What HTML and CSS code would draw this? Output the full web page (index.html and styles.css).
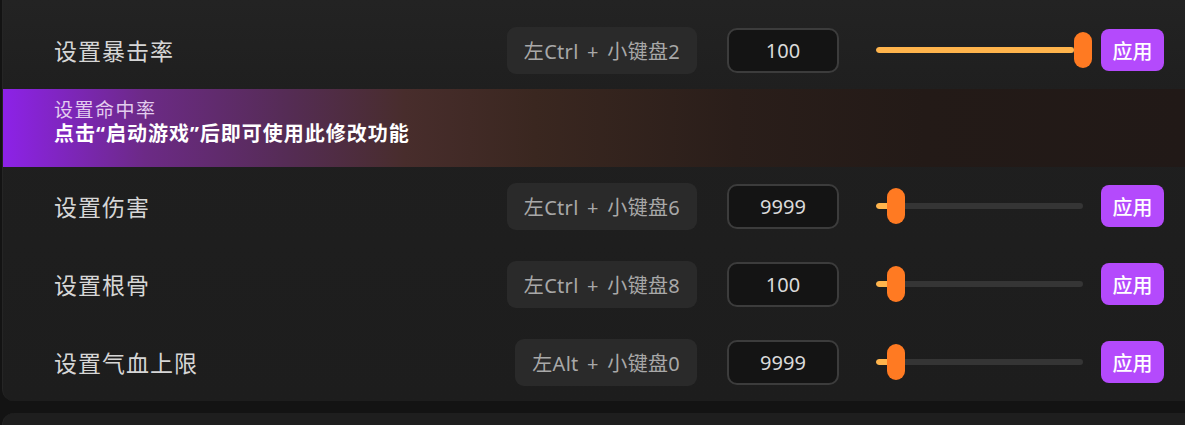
FILE: index.html
```html
<!DOCTYPE html>
<html lang="zh-CN">
<head>
<meta charset="utf-8">
<title>修改器</title>
<link rel="stylesheet" href="styles.css">
</head>
<body>
<div class="panel">
  <div class="row">
    <div class="label">设置暴击率</div>
    <div class="hotkey">左Ctrl + 小键盘2</div>
    <div class="value">100</div>
    <div class="slider">
      <div class="track"><div class="fill" style="width:198px"></div></div>
      <div class="thumb" style="left:198px"></div>
    </div>
    <button class="apply">应用</button>
  </div>
  <div class="row notice">
    <div class="notice-title">设置命中率</div>
    <div class="notice-text">点击“启动游戏”后即可使用此修改功能</div>
  </div>
  <div class="row">
    <div class="label">设置伤害</div>
    <div class="hotkey">左Ctrl + 小键盘6</div>
    <div class="value">9999</div>
    <div class="slider">
      <div class="track"><div class="fill" style="width:14px"></div></div>
      <div class="thumb" style="left:11px"></div>
    </div>
    <button class="apply">应用</button>
  </div>
  <div class="row">
    <div class="label">设置根骨</div>
    <div class="hotkey">左Ctrl + 小键盘8</div>
    <div class="value">100</div>
    <div class="slider">
      <div class="track"><div class="fill" style="width:14px"></div></div>
      <div class="thumb" style="left:11px"></div>
    </div>
    <button class="apply">应用</button>
  </div>
  <div class="row">
    <div class="label">设置气血上限</div>
    <div class="hotkey">左Alt + 小键盘0</div>
    <div class="value">9999</div>
    <div class="slider">
      <div class="track"><div class="fill" style="width:14px"></div></div>
      <div class="thumb" style="left:11px"></div>
    </div>
    <button class="apply">应用</button>
  </div>
</div>
<div class="panel next"></div>
</body>
</html>
```
FILE: styles.css
```css
html, body {
  margin: 0;
  padding: 0;
  background: #131313;
  overflow: hidden;
  font-family: "Noto Sans", "Noto Sans CJK SC", sans-serif;
}

.panel {
  margin-left: 2px;
  border-left: 1px solid #252525;
  background: linear-gradient(180deg, #232323 0px, #1f1f1f 90px, #1d1d1d 400px);
  border-radius: 0 0 0 12px;
  padding-top: 11px;
}

.panel.next {
  margin-top: 12px;
  height: 30px;
  padding-top: 0;
  border-radius: 12px 0 0 0;
  background: #1e1e1e;
}

.row {
  display: flex;
  align-items: center;
  height: 78px;
  padding: 0 21px 0 51px;
  box-sizing: border-box;
}

.label {
  flex: 1;
  color: #d6d6d6;
  font-size: 23px;
  letter-spacing: 1px;
}

.hotkey {
  height: 47px;
  display: flex;
  align-items: center;
  padding: 0 17px;
  background: #2a2a2a;
  border-radius: 9px;
  color: #a8a8a8;
  font-size: 20px;
  word-spacing: 3px;
  letter-spacing: 0.3px;
}

.value {
  margin-left: 30px;
  width: 112px;
  height: 45px;
  box-sizing: border-box;
  border: 2px solid #3c3c3c;
  border-radius: 10px;
  background: #141414;
  color: #dadada;
  font-size: 20px;
  display: flex;
  align-items: center;
  justify-content: center;
}

.slider {
  position: relative;
  margin-left: 37px;
  width: 216px;
  height: 36px;
  display: flex;
  align-items: center;
}

.track {
  width: 207px;
  height: 6px;
  border-radius: 3px;
  background: #353535;
  overflow: hidden;
}

.fill {
  height: 100%;
  background: #ffb44c;
  border-radius: 3px;
}

.thumb {
  position: absolute;
  top: 0;
  width: 18px;
  height: 36px;
  border-radius: 9px;
  background: #ff7a22;
}

.apply {
  margin-left: 9px;
  width: 63px;
  height: 42px;
  border: none;
  border-radius: 8px;
  background: #b44afc;
  color: #ffffff;
  font-family: "Noto Sans CJK SC", sans-serif;
  font-size: 20px;
  font-weight: 500;
  padding: 0;
}

.notice {
  display: block;
  padding-top: 9px;
  background: linear-gradient(90deg, #8d22e8 0%, #6c2a86 12%, #552c55 24%, #482d2c 34%, #3a2720 45%, #2a1e1a 62%, #231a17 78%, #211917 100%);
}

.notice-title {
  color: #e2cdee;
  font-size: 19px;
  line-height: 24px;
  letter-spacing: 1.5px;
}

.notice-text {
  color: #ffffff;
  font-size: 20px;
  font-weight: bold;
  line-height: 24px;
  letter-spacing: 1px;
}
```
